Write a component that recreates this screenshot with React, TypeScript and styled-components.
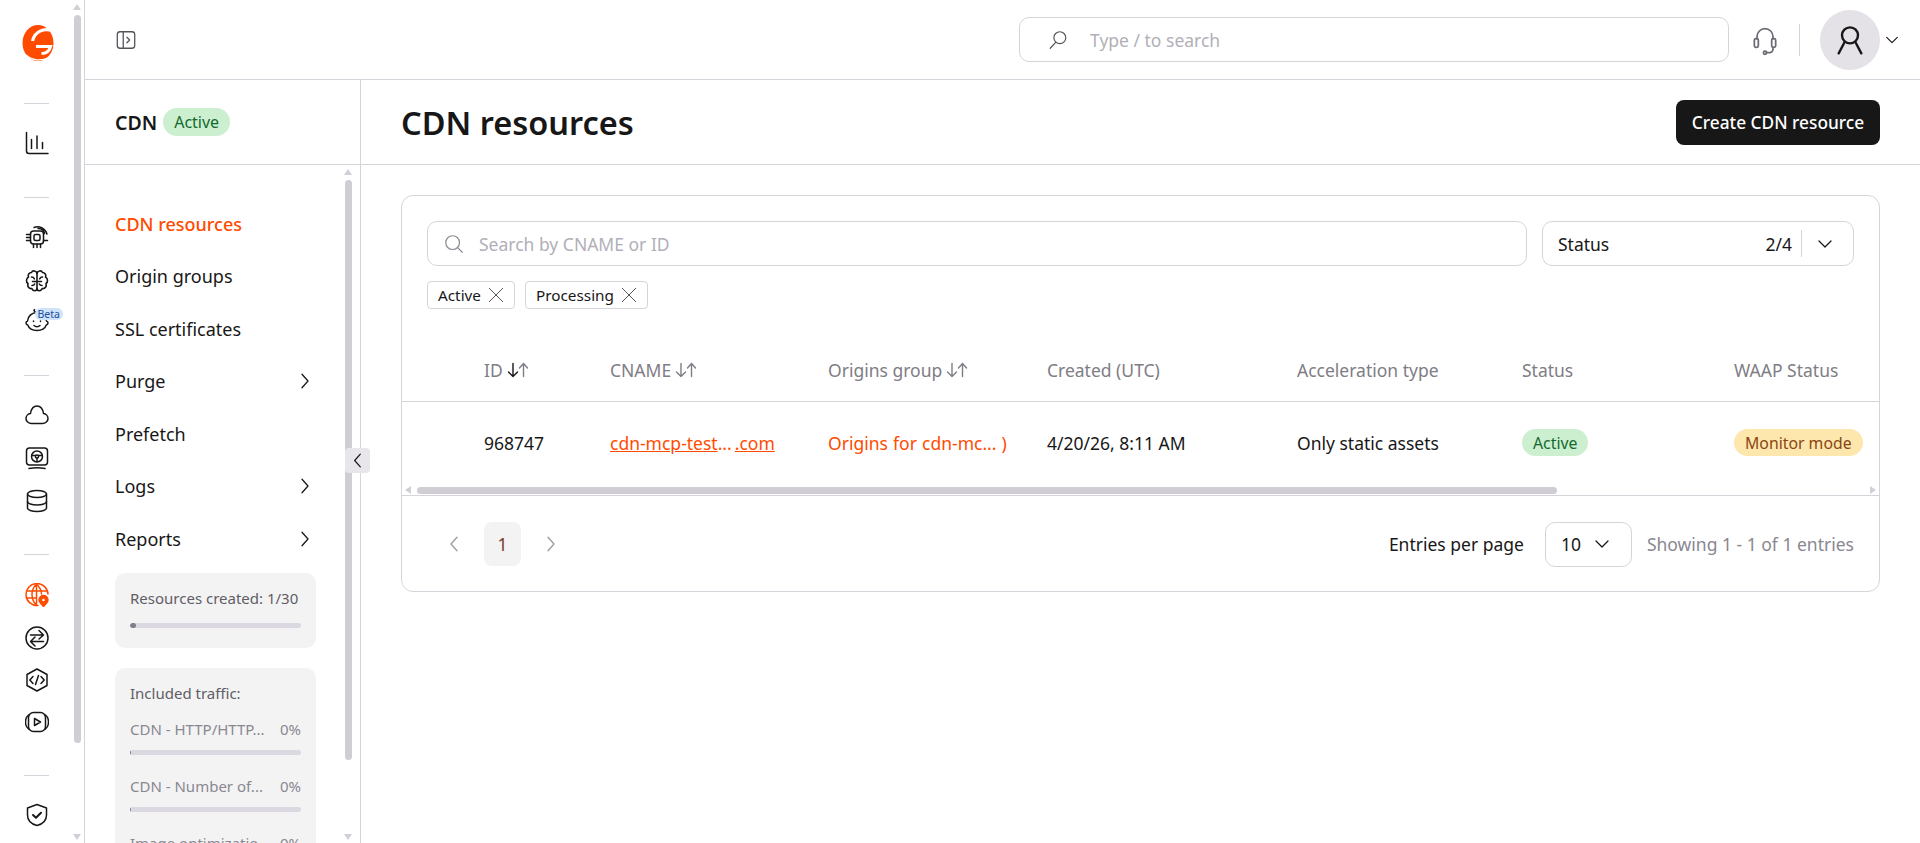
import type { ReactElement, ReactNode } from 'react'
import styled, { createGlobalStyle } from 'styled-components'

const ORANGE = '#ff4b00'
const INK = '#181717'
const LINE = '#d6d4da'
const MUTED = '#7f7d85'

const GlobalStyle = createGlobalStyle`
  html, body { margin: 0; padding: 0; height: 100%; overflow: hidden; background: #fff; }
  #root { height: 100%; }
  * { box-sizing: border-box; }
  body { font-family: "Noto Sans", "Open Sans", sans-serif; color: ${INK}; }
`

type IconProps = { children: ReactNode; size?: number; color?: string; sw?: number }

const Icon = ({ children, size = 24, color = INK, sw = 1.5 }: IconProps): ReactElement => (
  <svg
    width={size}
    height={size}
    viewBox="0 0 24 24"
    fill="none"
    stroke={color}
    strokeWidth={sw}
    strokeLinecap="round"
    strokeLinejoin="round">
    {children}
  </svg>
)

const Logo = (): ReactElement => (
  <svg width="32" height="38" viewBox="0 0 32 38" fill="none">
    <ellipse cx="16" cy="19" rx="15.500" ry="18" fill={ORANGE} />
    <path d="M31 7C22 3.500 12.500 7.500 10.500 17" stroke="#fff" strokeWidth="3.200" />
    <path d="M14 22.500H28.500C27.500 27 24 29.500 19.500 29.500" stroke="#fff" strokeWidth="3.200" />
    <path d="M4 31c6 5.500 15 6.500 23 2.500" stroke="#fff" strokeWidth="1.300" />
  </svg>
)

const ChartIcon = () => (
  <Icon>
    <path d="M1.500 1.500V20a2.500 2.500 0 0 0 2.500 2.500h19" />
    <path d="M6.500 17.500v-9M12 17.500V5M17.500 17.500v-6" />
  </Icon>
)
const ChipIcon = () => (
  <Icon>
    <rect x="5.500" y="6" width="13" height="13" rx="3" />
    <rect x="9" y="9.500" width="6" height="6" rx="1.500" />
    <path d="M1.500 9.500h4M1.500 12.500h4M1.500 15.500h4M8.500 19v3.500M12 19v3.500M15.500 19v3.500M18.500 15.500h4" />
    <path d="M9 2.500C14 .5 20 3 22 9M13 3.500c3 0 6 2 6.500 5" />
  </Icon>
)
const BrainIcon = () => (
  <Icon sw={1.600}>
    <path d="M12 4.500C11.500 1.500 7.500 1 6.500 3.500 4 3.500 2.500 6 3.500 8 1 9.500 .8 13 3 14.500 2 17.500 4 20 6.800 19.500 8 22.500 12 22.500 12 19.500z" />
    <path d="M12 4.500C12.500 1.500 16.500 1 17.500 3.500 20 3.500 21.500 6 20.500 8 23 9.500 23.200 13 21 14.500 22 17.500 20 20 17.200 19.500 16 22.500 12 22.500 12 19.500" />
    <path d="M6.500 8c1.300 0 2.300.6 2.800 1.800M17.500 8c-1.300 0-2.300.6-2.800 1.800M12 12.500H7.500M12 12.500h4.500M7 16.500c1.200 0 2.200-.5 2.700-1.500M17 16.500c-1.200 0-2.200-.5-2.700-1.500" />
  </Icon>
)
const BabyIcon = () => (
  <Icon>
    <path d="M12 3.500c-5 0-9 3.500-9.500 8.500-1 .3-1.500 1-1.500 2s.6 1.800 1.700 2c1.300 3.500 5 5.500 9.300 5.500s8-2 9.300-5.500c1.100-.2 1.700-1 1.700-2s-.5-1.700-1.500-2C21 7 17 3.500 12 3.500z" />
    <path d="M12 3.500C9.500 3 8.500 1.500 9.500.5" />
    <path d="M8.500 12v.5M15.500 12v.5M9 16.500c1.500 1.500 4.500 1.500 6 0" />
  </Icon>
)
const CloudIcon = () => (
  <Icon>
    <path d="M6.500 20.500C3.500 20.500 1 18.300 1 15.500c0-2.600 2-4.700 4.500-5C6.200 6 8.800 3 12 3s5.800 3 6.500 7.500c2.500.3 4.500 2.400 4.500 5 0 2.800-2.500 5-5.500 5h-11z" />
  </Icon>
)
const MonitorIcon = () => (
  <Icon>
    <rect x="1.500" y="2" width="21" height="17" rx="3" />
    <circle cx="12" cy="10.500" r="5.500" />
    <circle cx="12" cy="10.500" r="1.600" />
    <path d="M7 9.500h3.500M13.500 9.500H17M12 12v3.500M4 22.500c5-1 11-1 16 0" />
  </Icon>
)
const DatabaseIcon = () => (
  <Icon>
    <ellipse cx="12" cy="5" rx="9.500" ry="3.500" />
    <path d="M2.500 5v14c0 2 4.300 3.500 9.500 3.500s9.500-1.500 9.500-3.500V5" />
    <path d="M2.500 12.500c0 2 4.300 3.500 9.500 3.500s9.500-1.500 9.500-3.500" />
  </Icon>
)
const GlobePinIcon = () => (
  <Icon color={ORANGE}>
    <path d="M13 22.500A11 11 0 1 1 23 11" />
    <path d="M11.500 1c-6 6-6 15 0 21.500M11.500 1c3.500 3.500 5 7 5 10M1.500 8h20M1.500 15h10M11.500 1v21.500" />
    <path d="M18.500 23.500l-3.300-3.700a4.400 4.400 0 1 1 6.600 0z" fill={ORANGE} />
    <circle cx="18.500" cy="17" r="1.300" fill="#fff" stroke="none" />
  </Icon>
)
const TransferIcon = () => (
  <Icon>
    <circle cx="12" cy="12" r="11" />
    <path d="M5.500 9h12.500M14 4.500L18.500 9 14 13M18.500 15.500H6M10 11l-4.500 4.500L10 20" />
  </Icon>
)
const CodeIcon = () => (
  <Icon>
    <path d="M12 1l10 5.500v11L12 23 2 17.500v-11z" />
    <path d="M8 8.500L4.800 12 8 15.500M16 8.500l3.200 3.500-3.200 3.500M13.500 7.500l-3 9" />
  </Icon>
)
const VideoIcon = () => (
  <Icon>
    <rect x="3.500" y="2.500" width="17" height="19" rx="5" />
    <path d="M3.500 5C1 7 .5 9 .5 12s.5 5 3 7M20.500 5c2.500 2 3 4 3 7s-.5 5-3 7" />
    <path d="M9.500 8.500l6 3.500-6 3.500z" />
  </Icon>
)
const ShieldIcon = () => (
  <Icon>
    <path d="M12 1.500l9.500 3.500v7c0 5-3.500 9-9.500 10.500C6 21 2.500 17 2.500 12V5z" />
    <path d="M8 12l3 2.800 5-5" strokeWidth="2" />
  </Icon>
)
const PanelIcon = () => (
  <Icon size={22} color="#55535a" sw={1.400}>
    <rect x="2.500" y="3" width="19" height="18" rx="3" />
    <path d="M9 3v18M13 9l3 3-3 3" />
  </Icon>
)
const SearchGlass = ({ flip, color }: { flip?: boolean; color: string }) => (
  <Icon size={22} color={color} sw={1.300}>
    {flip ? (
      <>
        <circle cx="14" cy="9.500" r="6.500" />
        <path d="M9.500 14.500L3.500 21" />
      </>
    ) : (
      <>
        <circle cx="10.500" cy="10.500" r="7.500" />
        <path d="M16 16l5 5" />
      </>
    )}
  </Icon>
)
const HeadsetIcon = () => (
  <Icon size={32} color="#6c6a72" sw={1.300}>
    <path d="M6 11V9.500a6 6 0 0 1 12 0V11" />
    <rect x="4" y="11" width="3" height="6.500" rx="1.200" />
    <rect x="17" y="11" width="3" height="6.500" rx="1.200" />
    <path d="M18 17.500v1.500a2.500 2.500 0 0 1-2.500 2.500H13" />
    <circle cx="12" cy="21.500" r="1.200" />
  </Icon>
)
const UserIcon = () => (
  <Icon size={32} sw={1.800}>
    <circle cx="12" cy="8.500" r="6" />
    <path d="M8 13.500L3.500 22M16 13.500L20.500 22" />
  </Icon>
)
const Chevron = ({ dir = 'down', size = 18, color = INK }: { dir?: 'down' | 'left' | 'right'; size?: number; color?: string }) => {
  const d = dir === 'down' ? 'M4 8l8 8 8-8' : dir === 'left' ? 'M16 3l-8 9 8 9' : 'M8 3l8 9-8 9'
  return (
    <Icon size={size} color={color} sw={1.700}>
      <path d={d} />
    </Icon>
  )
}
const CloseIcon = () => (
  <Icon size={16} color="#55535a" sw={1.500}>
    <path d="M2 2l20 20M22 2L2 22" />
  </Icon>
)
const SortArrows = ({ active }: { active?: boolean }) => (
  <svg width="23" height="16" viewBox="0 0 23 16" fill="none" strokeWidth="1.400" strokeLinecap="round" strokeLinejoin="round">
    <path d="M6 1.500v13M1.500 10l4.500 4.500 4.500-4.500" stroke={active ? INK : MUTED} />
    <path d="M16.500 14.500v-13M12.500 6l4-4.500 4 4.500" stroke={MUTED} />
  </svg>
)

const Scrollbar = ({ thumb }: { thumb: number }) => (
  <ScrollTrack>
    <ArrowUp />
    <ScrollThumb $height={thumb} />
    <ArrowDown />
  </ScrollTrack>
)

const App = (): ReactElement => (
  <>
    <GlobalStyle />
    <Page>
      <Rail>
        <RailIcons>
          <LogoSlot>
            <Logo />
          </LogoSlot>
          <RailRule $top={41} />
          <RailItem $top={27}>
            <ChartIcon />
          </RailItem>
          <RailRule $top={42} />
          <RailItem $top={27}>
            <ChipIcon />
          </RailItem>
          <RailItem $top={20}>
            <BrainIcon />
          </RailItem>
          <RailItem $top={16}>
            <BabyIcon />
            <BetaTag>Beta</BetaTag>
          </RailItem>
          <RailRule $top={42} />
          <RailItem $top={27}>
            <CloudIcon />
          </RailItem>
          <RailItem $top={19}>
            <MonitorIcon />
          </RailItem>
          <RailItem $top={19}>
            <DatabaseIcon />
          </RailItem>
          <RailRule $top={41} />
          <RailItem $top={28}>
            <GlobePinIcon />
          </RailItem>
          <RailItem $top={19}>
            <TransferIcon />
          </RailItem>
          <RailItem $top={18}>
            <CodeIcon />
          </RailItem>
          <RailItem $top={18}>
            <VideoIcon />
          </RailItem>
          <RailRule $top={41} />
          <RailItem $top={27}>
            <ShieldIcon />
          </RailItem>
        </RailIcons>
        <Scrollbar thumb={728} />
      </Rail>
      <Workspace>
        <TopBar>
          <PanelToggle>
            <PanelIcon />
          </PanelToggle>
          <GlobalSearch>
            <SearchGlass flip color="#55535a" />
            <GlobalSearchText>Type / to search</GlobalSearchText>
          </GlobalSearch>
          <HeadsetSlot>
            <HeadsetIcon />
          </HeadsetSlot>
          <TopDivider />
          <Avatar>
            <UserIcon />
          </Avatar>
          <AvatarCaret>
            <Chevron size={16} />
          </AvatarCaret>
        </TopBar>
        <Body>
          <Side>
            <SideHead>
              <SideTitle>CDN</SideTitle>
              <SideBadge>Active</SideBadge>
            </SideHead>
            <SideBody>
              <SideNav>
                <NavItem $active>CDN resources</NavItem>
                <NavItem>Origin groups</NavItem>
                <NavItem>SSL certificates</NavItem>
                <NavItem>
                  Purge
                  <Chevron dir="right" />
                </NavItem>
                <NavItem>Prefetch</NavItem>
                <NavItem>
                  Logs
                  <Chevron dir="right" />
                </NavItem>
                <NavItem>
                  Reports
                  <Chevron dir="right" />
                </NavItem>
                <QuotaCard>
                  <QuotaTitle>Resources created: 1/30</QuotaTitle>
                  <Bar>
                    <BarFill style={{ width: '6px' }} />
                  </Bar>
                </QuotaCard>
                <TrafficCard>
                  <QuotaTitle>Included traffic:</QuotaTitle>
                  <TrafficRow>
                    <TrafficName>CDN - HTTP/HTTP...</TrafficName>
                    <span>0%</span>
                  </TrafficRow>
                  <TrafficBar>
                    <BarFill style={{ width: '1px' }} />
                  </TrafficBar>
                  <TrafficRow>
                    <TrafficName>CDN - Number of...</TrafficName>
                    <span>0%</span>
                  </TrafficRow>
                  <TrafficBar>
                    <BarFill style={{ width: '1px' }} />
                  </TrafficBar>
                  <TrafficRow>
                    <TrafficName>Image optimizatio...</TrafficName>
                    <span>0%</span>
                  </TrafficRow>
                </TrafficCard>
              </SideNav>
              <Scrollbar thumb={580} />
            </SideBody>
            <CollapseButton>
              <Chevron dir="left" size={17} />
            </CollapseButton>
          </Side>
          <Main>
            <MainHead>
              <PageTitle>CDN resources</PageTitle>
              <PrimaryButton>Create CDN resource</PrimaryButton>
            </MainHead>
            <Content>
              <Card>
                <Filters>
                  <FilterRow>
                    <SearchInput>
                      <SearchGlass color="#8c8a92" />
                      <SearchText>Search by CNAME or ID</SearchText>
                    </SearchInput>
                    <StatusSelect>
                      <StatusLabel>Status</StatusLabel>
                      <StatusCount>2/4</StatusCount>
                      <StatusDivider />
                      <Chevron size={18} />
                    </StatusSelect>
                  </FilterRow>
                  <Chips>
                    <Chip>
                      Active
                      <CloseIcon />
                    </Chip>
                    <Chip>
                      Processing
                      <CloseIcon />
                    </Chip>
                  </Chips>
                </Filters>
                <HeadRow>
                  <span />
                  <HeadCell>
                    ID <SortArrows active />
                  </HeadCell>
                  <HeadCell>
                    CNAME <SortArrows />
                  </HeadCell>
                  <HeadCell>
                    Origins group <SortArrows />
                  </HeadCell>
                  <HeadCell>Created (UTC)</HeadCell>
                  <HeadCell>Acceleration type</HeadCell>
                  <HeadCell>Status</HeadCell>
                  <HeadCell>WAAP Status</HeadCell>
                </HeadRow>
                <DataRow>
                  <span />
                  <span>968747</span>
                  <CnameLink>
                    <u>cdn-mcp-test</u>...<CnameTail>.com</CnameTail>
                  </CnameLink>
                  <OriginLink>Origins for cdn-mc... )</OriginLink>
                  <span>4/20/26, 8:11 AM</span>
                  <span>Only static assets</span>
                  <div>
                    <StatusPill $tone="green">Active</StatusPill>
                  </div>
                  <div>
                    <StatusPill $tone="yellow">Monitor mode</StatusPill>
                  </div>
                </DataRow>
                <HScroll>
                  <ArrowLeft />
                  <HThumb />
                  <ArrowRight />
                </HScroll>
                <Footer>
                  <Pager>
                    <Chevron dir="left" size={18} color="#9b99a1" />
                    <PageNum>1</PageNum>
                    <Chevron dir="right" size={18} color="#9b99a1" />
                  </Pager>
                  <EntriesLabel>Entries per page</EntriesLabel>
                  <EntriesSelect>
                    10
                    <Chevron size={18} />
                  </EntriesSelect>
                  <ShowingText>Showing 1 - 1 of 1 entries</ShowingText>
                </Footer>
              </Card>
            </Content>
          </Main>
        </Body>
      </Workspace>
    </Page>
  </>
)

export default App

const Page = styled.div`
  display: flex;
  height: 843px;
  width: 1920px;
  overflow: hidden;
`

const Rail = styled.aside`
  display: flex;
  flex: 0 0 85px;
  height: 100%;
  border-right: 1px solid ${LINE};
  padding-right: 3px;
  overflow: hidden;
`
const RailIcons = styled.div`
  flex: 1;
  display: flex;
  flex-direction: column;
  align-items: center;
  padding: 24px 0 0 0;
`
const LogoSlot = styled.div`
  display: flex;
  height: 38px;
  margin-left: 3px;
`
const RailRule = styled.div<{ $top: number }>`
  flex: none;
  width: 25px;
  height: 1px;
  background: ${LINE};
  margin-top: ${p => p.$top}px;
`
const RailItem = styled.div<{ $top: number }>`
  flex: none;
  position: relative;
  display: flex;
  width: 24px;
  height: 24px;
  margin-top: ${p => p.$top}px;
`
const BetaTag = styled.span`
  position: absolute;
  left: 10px;
  top: -1px;
  padding: 0 3px;
  font-size: 10.500px;
  line-height: 12px;
  color: #1c4f9c;
  background: #cfe3fb;
  border-radius: 6px;
`

const ScrollTrack = styled.div`
  flex: 0 0 7px;
  display: flex;
  flex-direction: column;
  align-items: center;
  height: 100%;
  padding: 4px 0 0;
`
const ArrowUp = styled.div`
  flex: none;
  width: 0;
  height: 0;
  border-left: 4px solid transparent;
  border-right: 4px solid transparent;
  border-bottom: 6px solid #d2d0d6;
`
const ArrowDown = styled.div`
  flex: none;
  width: 0;
  height: 0;
  margin-top: auto;
  margin-bottom: 3px;
  border-left: 4px solid transparent;
  border-right: 4px solid transparent;
  border-top: 6px solid #d2d0d6;
`
const ScrollThumb = styled.div<{ $height: number }>`
  flex: none;
  width: 7px;
  height: ${p => p.$height}px;
  margin-top: 5px;
  border-radius: 4px;
  background: #d0ced4;
`

const Workspace = styled.div`
  flex: 1;
  min-width: 0;
  display: flex;
  flex-direction: column;
`
const TopBar = styled.header`
  flex: 0 0 80px;
  display: flex;
  align-items: center;
  padding: 0 40px 0 30px;
  border-bottom: 1px solid ${LINE};
`
const PanelToggle = styled.div`
  display: flex;
  margin-right: auto;
`
const GlobalSearch = styled.div`
  display: flex;
  align-items: center;
  width: 710px;
  height: 45px;
  padding-left: 27px;
  border: 1px solid ${LINE};
  border-radius: 10px;
`
const GlobalSearchText = styled.span`
  margin-left: 21px;
  font-size: 17.500px;
  color: #b1afb8;
`
const HeadsetSlot = styled.div`
  display: flex;
  margin-left: 20px;
`
const TopDivider = styled.div`
  width: 1px;
  height: 32px;
  margin: 0 20px 0 18px;
  background: ${LINE};
`
const Avatar = styled.div`
  display: flex;
  align-items: center;
  justify-content: center;
  width: 60px;
  height: 60px;
  border-radius: 50%;
  background: #e4e2e7;
`
const AvatarCaret = styled.div`
  display: flex;
  margin: 0 -20px 0 4px;
`

const Body = styled.div`
  flex: 1;
  min-height: 0;
  display: flex;
`
const Side = styled.aside`
  position: relative;
  flex: 0 0 276px;
  display: flex;
  flex-direction: column;
  border-right: 1px solid ${LINE};
`
const SideHead = styled.div`
  flex: 0 0 85px;
  display: flex;
  align-items: center;
  gap: 6px;
  padding-left: 30px;
  border-bottom: 1px solid ${LINE};
`
const SideTitle = styled.span`
  font-size: 19.500px;
  font-weight: 600;
`
const SideBadge = styled.span`
  display: inline-flex;
  align-items: center;
  height: 28px;
  padding: 0 11px;
  border-radius: 14px;
  font-size: 16px;
  color: #14692f;
  background: #ccefd0;
`
const SideBody = styled.div`
  flex: 1;
  min-height: 0;
  display: flex;
  padding-right: 8px;
`
const SideNav = styled.nav`
  flex: 1;
  min-width: 0;
  overflow: hidden;
  padding: 32.500px 28px 0 30px;
`
const NavItem = styled.div<{ $active?: boolean }>`
  display: flex;
  align-items: center;
  justify-content: space-between;
  height: 52.500px;
  padding-right: 2px;
  font-size: 18px;
  font-weight: ${p => (p.$active ? 500 : 400)};
  color: ${p => (p.$active ? ORANGE : INK)};
`
const QuotaCard = styled.div`
  margin-top: 7.500px;
  padding: 14px 15px 20px;
  border-radius: 10px;
  background: #f3f3f4;
`
const TrafficCard = styled(QuotaCard)`
  margin-top: 20px;
  padding-bottom: 0;
  height: 220px;
`
const QuotaTitle = styled.div`
  font-size: 15px;
  line-height: 22px;
  white-space: nowrap;
  color: #5f5d66;
`
const Bar = styled.div`
  height: 5px;
  margin-top: 14px;
  border-radius: 3px;
  overflow: hidden;
  background: #dcd8e1;
`
const TrafficBar = styled(Bar)`
  margin-top: 10px;
`
const BarFill = styled.div`
  height: 100%;
  border-radius: 3px;
  background: #807e86;
`
const TrafficRow = styled.div`
  display: flex;
  justify-content: space-between;
  margin-top: 20px;
  font-size: 15px;
  line-height: 22px;
  color: #8a8791;
  ${QuotaTitle} + & {
    margin-top: 14px;
  }
`
const TrafficName = styled.span`
  white-space: nowrap;
`
const CollapseButton = styled.div`
  position: absolute;
  left: 260px;
  top: 368px;
  display: flex;
  align-items: center;
  justify-content: center;
  width: 25px;
  height: 25px;
  border-radius: 4px;
  background: #e8e6ea;
`

const Main = styled.main`
  flex: 1;
  min-width: 0;
  display: flex;
  flex-direction: column;
`
const MainHead = styled.div`
  flex: 0 0 85px;
  display: flex;
  align-items: center;
  justify-content: space-between;
  padding: 0 40px 0 40px;
  border-bottom: 1px solid ${LINE};
`
const PageTitle = styled.h1`
  margin: 0;
  font-size: 32.500px;
  font-weight: 600;
`
const PrimaryButton = styled.button`
  width: 204px;
  height: 45px;
  border: 0;
  border-radius: 8px;
  font-family: inherit;
  font-size: 17.300px;
  font-weight: 500;
  color: #fff;
  background: ${INK};
`
const Content = styled.div`
  padding: 30px 40px 0 40px;
`
const Card = styled.section`
  height: 397px;
  border: 1px solid ${LINE};
  border-radius: 12px;
`
const Filters = styled.div`
  padding: 25px 25px 0 25px;
`
const FilterRow = styled.div`
  display: flex;
  gap: 15px;
`
const SearchInput = styled.div`
  flex: 1;
  display: flex;
  align-items: center;
  height: 45px;
  padding-left: 15px;
  border: 1px solid ${LINE};
  border-radius: 10px;
`
const SearchText = styled.span`
  margin-left: 14px;
  font-size: 17.500px;
  color: #b1afb8;
`
const StatusSelect = styled.div`
  flex: 0 0 312px;
  display: flex;
  align-items: center;
  height: 45px;
  padding: 0 19px 0 15px;
  border: 1px solid ${LINE};
  border-radius: 10px;
  font-size: 17.500px;
`
const StatusLabel = styled.span`
  margin-right: auto;
`
const StatusCount = styled.span``
const StatusDivider = styled.span`
  width: 1px;
  height: 27px;
  margin: 0 14px 0 9px;
  background: ${LINE};
`
const Chips = styled.div`
  display: flex;
  gap: 10px;
  margin-top: 15px;
`
const Chip = styled.span`
  display: inline-flex;
  align-items: center;
  gap: 7px;
  height: 28px;
  padding: 0 10px;
  border: 1px solid ${LINE};
  border-radius: 4px;
  font-size: 15.300px;
`
const COLUMNS = '82px 126px 218px 219px 250px 225px 212px 1fr'
const HeadRow = styled.div`
  display: grid;
  grid-template-columns: ${COLUMNS};
  align-items: center;
  height: 60px;
  margin-top: 33px;
  padding-bottom: 4px;
  border-bottom: 1px solid ${LINE};
`
const HeadCell = styled.div`
  display: flex;
  align-items: center;
  gap: 4px;
  font-size: 17.500px;
  color: ${MUTED};
`
const DataRow = styled.div`
  display: grid;
  grid-template-columns: ${COLUMNS};
  align-items: center;
  height: 83px;
  padding-bottom: 2px;
  font-size: 17.500px;
`
const CnameLink = styled.span`
  color: ${ORANGE};
`
const CnameTail = styled.u`
  margin-left: 3px;
`
const OriginLink = styled.span`
  word-spacing: 0.600px;
  color: ${ORANGE};
`
const StatusPill = styled.span<{ $tone: 'green' | 'yellow' }>`
  display: inline-flex;
  align-items: center;
  height: 27px;
  padding: 0 11px;
  border-radius: 14px;
  font-size: 15.800px;
  color: ${p => (p.$tone === 'green' ? '#14692f' : '#8a4513')};
  background: ${p => (p.$tone === 'green' ? '#ccefd0' : '#fde7ad')};
`
const HScroll = styled.div`
  display: flex;
  align-items: center;
  height: 11px;
  padding: 0 3px;
  border-bottom: 1px solid ${LINE};
`
const ArrowLeft = styled.div`
  flex: none;
  width: 0;
  height: 0;
  border-top: 4px solid transparent;
  border-bottom: 4px solid transparent;
  border-right: 6px solid #d2d0d6;
`
const ArrowRight = styled.div`
  flex: none;
  width: 0;
  height: 0;
  margin-left: auto;
  border-top: 4px solid transparent;
  border-bottom: 4px solid transparent;
  border-left: 6px solid #d2d0d6;
`
const HThumb = styled.div`
  flex: 0 0 1140px;
  height: 7px;
  margin-left: 6px;
  border-radius: 4px;
  background: #d0ced4;
`
const Footer = styled.div`
  display: flex;
  align-items: center;
  height: 96px;
  padding: 0 25px 0 43px;
  font-size: 17.500px;
`
const Pager = styled.div`
  display: flex;
  align-items: center;
  gap: 21px;
  margin-right: auto;
`
const PageNum = styled.span`
  display: flex;
  align-items: center;
  justify-content: center;
  width: 37px;
  height: 44px;
  border-radius: 8px;
  color: #7a3a2a;
  background: #f3f3f4;
`
const EntriesLabel = styled.span``
const EntriesSelect = styled.div`
  display: flex;
  align-items: center;
  justify-content: space-between;
  width: 87px;
  height: 45px;
  margin: 0 15px 0 21px;
  padding: 0 20px 0 15px;
  border: 1px solid ${LINE};
  border-radius: 10px;
`
const ShowingText = styled.span`
  color: #8a8791;
`
